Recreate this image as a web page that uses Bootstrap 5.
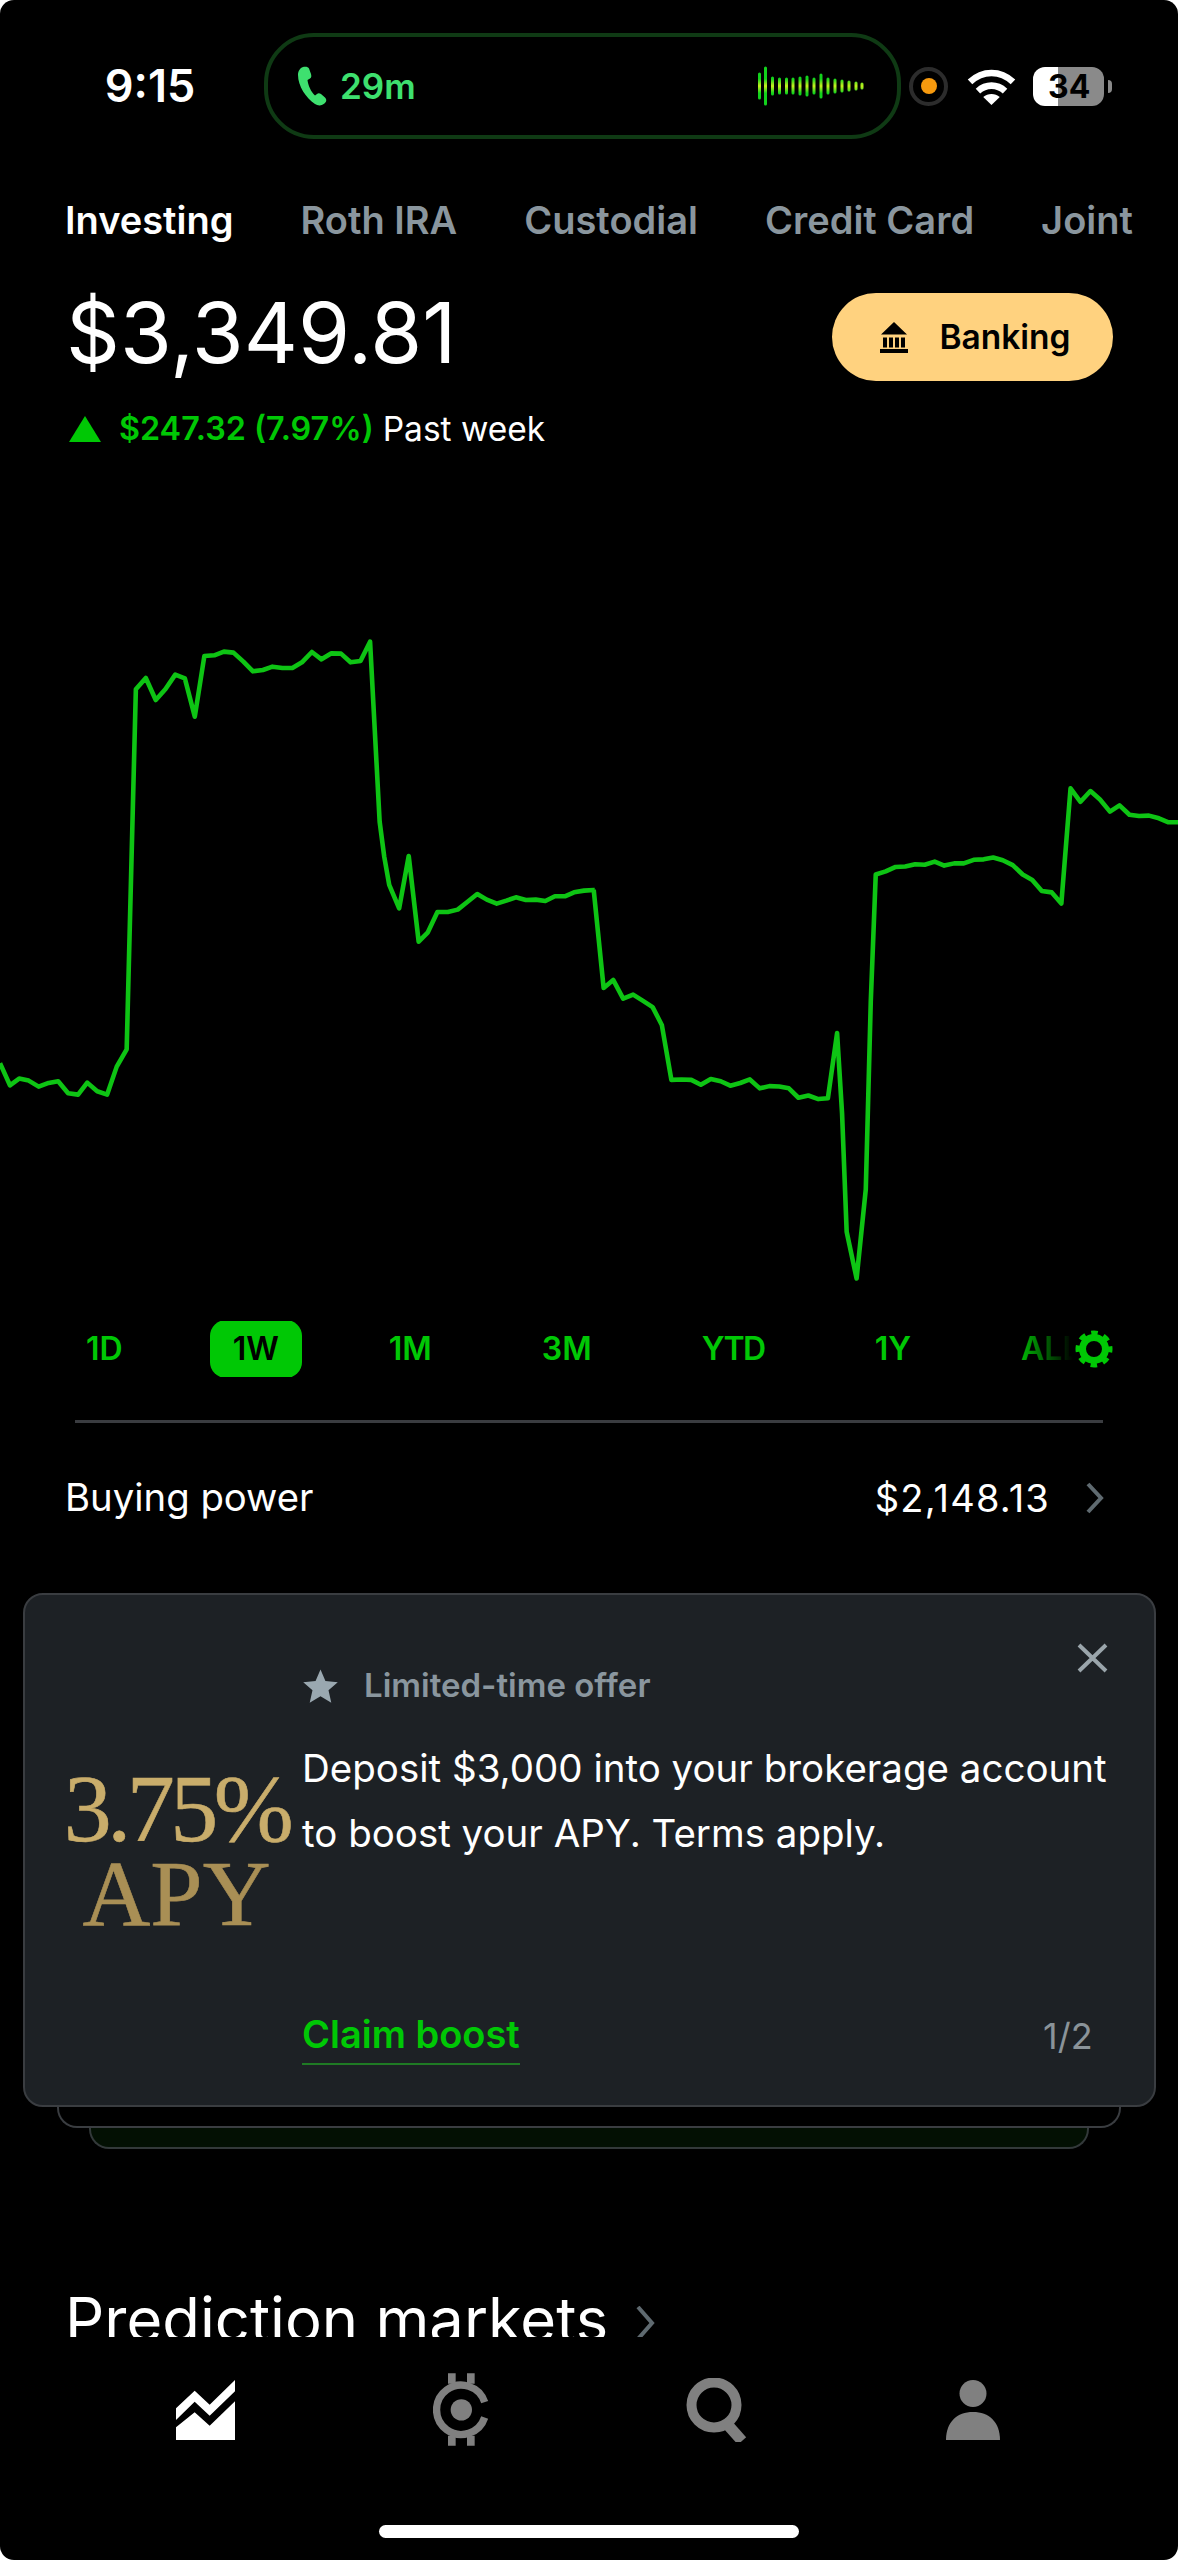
<!DOCTYPE html>
<html lang="en">
  <head>
    <meta charset="UTF-8" />
    <meta name="viewport" content="width=device-width, initial-scale=1.0" />
    <title>Investing</title>
    <link href="https://cdn.jsdelivr.net/npm/bootstrap@5.3.0/dist/css/bootstrap.min.css" rel="stylesheet" />
    <style>
      body {
        background: #fff;
        font-family: Inter, "Liberation Sans", sans-serif;
      }
      .phone {
        width: 1178px;
        height: 2560px;
        background: #000;
        color: #fff;
        border-radius: 14px;
        overflow: hidden;
      }
      .status-row {
        height: 106px;
        margin-top: 33px;
        padding-left: 36px;
      }
      .clock {
        width: 228px;
        text-align: center;
        font-size: 45px;
        font-weight: 600;
      }
      .call-pill {
        width: 637px;
        height: 106px;
        border: 4px solid #0f3a14;
        border-radius: 50px;
        padding: 0 32px 0 29px;
      }
      .call-time {
        color: #3ee06f;
        font-size: 35px;
        font-weight: 600;
        margin-left: 13px;
      }
      .rec-dot {
        width: 39px;
        height: 39px;
        margin-left: 8px;
        border: 4px solid #2c2c2c;
        border-radius: 50%;
      }
      .rec-dot i {
        width: 16px;
        height: 16px;
        border-radius: 50%;
        background: #f79a0e;
      }
      .wifi-ic {
        margin-left: 19px;
      }
      .battery {
        width: 71px;
        height: 39px;
        margin-left: 17px;
        border-radius: 12px;
        background: linear-gradient(90deg, #fff 0 25px, #8a8a8a 25px);
        color: #000;
        font-size: 32px;
        font-weight: 700;
        line-height: 39px;
        padding-left: 15px;
      }
      .battery-nub {
        width: 4px;
        height: 13px;
        margin-left: 4px;
        background: #8a8a8a;
        border-radius: 0 4px 4px 0;
      }
      .acct-tabs {
        margin-top: 57px;
        height: 48px;
        padding-left: 65px;
        gap: 67px;
        font-size: 38px;
        font-weight: 600;
        line-height: 48px;
      }
      .acct-tabs span {
        color: #8a969e;
      }
      .acct-tabs span.on {
        color: #fff;
      }
      .balance-row {
        margin-top: 49px;
        height: 88px;
        padding: 0 65px 0 66px;
      }
      .balance {
        font-size: 84px;
        font-weight: 400;
        line-height: 88px;
        padding-bottom: 8px;
      }
      .bank-btn {
        width: 281px;
        height: 88px;
        border-radius: 44px;
        border: 0;
        background: #ffd27f;
        color: #000;
        font-size: 33.5px;
        font-weight: 600;
        gap: 31px;
      }
      .bank-btn.p-0 {
        padding-left: 6px !important;
      }
      .bank-btn:hover {
        background: #ffd27f;
        color: #000;
      }
      .change-row {
        margin-top: 28px;
        height: 40px;
        padding-left: 69px;
        font-size: 33.5px;
        line-height: 40px;
      }
      .gain {
        color: #00c805;
        font-size: 32.3px;
        font-weight: 600;
        margin: 0 9px 0 18px;
      }
      .chart {
        display: block;
        margin-top: 151px;
      }
      .range-row {
        margin-top: 21px;
        height: 56px;
        padding-left: 63px;
        gap: 64px;
        font-size: 32px;
        font-weight: 600;
        color: #00c805;
      }
      .range-row span {
        padding: 0 23px;
        line-height: 58px;
        border-radius: 16px;
        flex: none;
      }
      .range-row span.on {
        background: #00c805;
        color: #000;
      }
      .range-row span.tight {
        letter-spacing: -1.5px;
      }
      .range-fade {
        top: 0;
        right: 0;
        width: 162px;
        height: 56px;
        padding-right: 65px;
        background: linear-gradient(90deg, rgba(0, 0, 0, 0), #000 35%);
      }
      .rule-line {
        height: 3px;
        margin: 43px 75px 0;
        background: #3a3c40;
      }
      .power-row {
        margin-top: 50px;
        height: 50px;
        padding: 0 74px 0 65px;
        font-size: 38.3px;
      }
      .power-amt {
        gap: 36px;
        font-size: 38px;
        letter-spacing: 1.2px;
      }
      .offer {
        margin: 70px 22px 0 23px;
        height: 514px;
        background: #1d2125;
        border: 2px solid #3a3d41;
        border-radius: 20px;
        z-index: 3;
      }
      .apy-side {
        width: 277px;
        padding: 166px 0 0 26px;
        font-family: "Liberation Serif", serif;
        text-align: center;
      }
      .apy-num {
        font-size: 96px;
        line-height: 96px;
        letter-spacing: -4.5px;
        white-space: nowrap;
        color: #c9ad6b;
        -webkit-text-stroke: 0.6px #c9ad6b;
      }
      .apy-lbl {
        font-size: 94px;
        line-height: 73px;
        color: #a98f55;
        -webkit-text-stroke: 0.6px #a98f55;
      }
      .offer-body {
        padding: 69px 48px 0 0;
      }
      .offer-tag {
        height: 44px;
        gap: 25px;
        font-size: 33px;
        font-weight: 600;
        color: #8a969e;
      }
      .offer-text {
        margin: 28px 0 0;
        font-size: 38.5px;
        line-height: 65px;
        white-space: nowrap;
      }
      .offer-foot {
        margin-top: 143px;
      }
      .claim {
        font-size: 38px;
        font-weight: 600;
        line-height: 50px;
        color: #00c805;
        text-decoration: none;
        border-bottom: 2px solid #1f7a24;
        padding-bottom: 4px;
      }
      .pager {
        margin-right: 14px;
        font-size: 36px;
        color: #8a9399;
      }
      .offer-x {
        top: 48px;
        right: 46px;
      }
      .under-a {
        margin: -50px 57px 0 57px;
        height: 71px;
        background: #000;
        border: 2px solid #3a3d41;
        border-top: 0;
        border-radius: 0 0 20px 20px;
        z-index: 2;
      }
      .under-b {
        margin: -50px 89px 0 89px;
        height: 71px;
        background: #031003;
        border: 2px solid #33393a;
        border-top: 0;
        border-radius: 0 0 20px 20px;
        z-index: 1;
      }
      .pred-clip {
        margin-top: 133px;
        height: 55px;
        padding-left: 65px;
        gap: 28px;
        font-size: 61.5px;
        line-height: 76px;
        white-space: nowrap;
        align-items: flex-start;
      }
      .pred-chev {
        margin-top: 24px;
      }
      .tab-bar {
        margin-top: 36px;
        height: 73px;
        padding-left: 77px;
      }
      .tab-bar div {
        width: 256px;
      }
      .home-bar {
        width: 420px;
        height: 13px;
        margin: 79px auto 0;
        background: #fff;
        border-radius: 7px;
      }
    </style>
  </head>
  <body>
    <div class="phone d-flex flex-column">
      <!-- status bar -->
      <div class="status-row d-flex align-items-center flex-shrink-0">
        <div class="clock">9:15</div>
        <div class="call-pill d-flex align-items-center">
          <svg width="30" height="40" viewBox="0 0 30 40">
            <path fill="#3ee06f" d="M6 1C3 2 1 5 1 9c0 11 8 23 17 29 3 2 7 2 10-1 2-2 1.500-4 0-5.500L24 28c-1.500-1-3-1-4 0l-2 1.500c-4-3.500-7-10.500-7.500-15.500l2.500-1.500c1.500-1 1.500-2.500 1-4.500l-2-5.500C11.300.8 8.500.3 6 1z" />
          </svg>
          <span class="call-time">29m</span>
          <svg class="ms-auto" width="108" height="40" viewBox="0 0 108 40">
            <defs>
              <linearGradient id="wave" gradientUnits="userSpaceOnUse" x1="0" y1="2" x2="0" y2="38">
                <stop offset="0.3" stop-color="#12d21c" />
                <stop offset="0.5" stop-color="#c8f01f" />
                <stop offset="0.7" stop-color="#12d21c" />
              </linearGradient>
            </defs>
            <path stroke="url(#wave)" stroke-width="3" stroke-linecap="round" fill="none" d="M2.500 8v24M8.500 2v36M15.500 12v16M22.500 13v14M29.500 13v14M36 13v14M43 12v16M50 11v18M57 13v14M64 9v22M71 13v14M78 14v12M85 15v10M92 16v8M99 17v6M105 18v4" />
          </svg>
        </div>
        <div class="rec-dot d-flex align-items-center justify-content-center"><i></i></div>
        <svg class="wifi-ic" width="49" height="37" viewBox="200 50 146 112">
          <path fill="none" stroke="#fff" stroke-width="20" d="M208 92c38-36 92-36 130 0" />
          <path fill="none" stroke="#fff" stroke-width="20" d="M232 120c24-22 58-22 82 0" />
          <path fill="#fff" d="M248 138c14-12 36-12 50 0l-25 24z" />
        </svg>
        <div class="battery">34</div>
        <div class="battery-nub"></div>
      </div>

      <!-- account tabs -->
      <div class="acct-tabs d-flex flex-shrink-0 text-nowrap overflow-hidden">
        <span class="on">Investing</span><span>Roth IRA</span><span>Custodial</span><span>Credit Card</span><span>Joint</span>
      </div>

      <div class="balance-row d-flex align-items-center justify-content-between flex-shrink-0">
        <div class="balance">$3,349.81</div>
        <button class="btn bank-btn d-flex align-items-center justify-content-center p-0">
          <svg width="28" height="31" viewBox="0 0 28 31">
            <path d="M14 0 1 12.500h26zM3 15.500h4v10H3zM9 15.500h4v10H9zM15 15.500h4v10h-4zM21 15.500h4v10h-4zM0 27h28v4H0z" />
          </svg>
          <span>Banking</span>
        </button>
      </div>

      <div class="change-row d-flex align-items-center flex-shrink-0">
        <svg width="32" height="26" viewBox="0 0 32 26"><path fill="#00c805" d="M16 0l16 26H0z" /></svg>
        <span class="gain">$247.32 (7.97%)</span><span>Past week</span>
      </div>

      <!-- chart: traced from the week's line, two runs so each keeps its own scale -->
      <svg class="chart flex-shrink-0" width="1178" height="700" viewBox="0 0 1178 700">
        <g fill="none" stroke="#0ec414" stroke-width="4.600" stroke-linejoin="round">
          <polyline vector-effect="non-scaling-stroke" transform="scale(0.3827 0.3333)" points="0,1390 26,1456 50,1436 75,1442 101,1460 127,1449 152,1444 178,1480 204,1484 228,1448 254,1474 280,1484 305,1400 331,1348 355,268 381,234 407,300 432,268 458,224 483,235 509,350 534,168 560,166 585,155 610,158 636,185 661,214 687,210 712,200 738,204 764,204 789,187 815,156 840,178 866,160 891,161 916,187 942,183 967,125 992,665 1004,770 1017,855 1043,925 1068,768 1094,1025 1118,997 1143,936 1170,936 1196,929 1221,906 1247,882 1272,899 1298,911 1323,902 1348,892 1374,900 1400,899 1425,903 1450,889 1476,889 1500,877 1526,872 1552,870 1554,870" />
          <polyline vector-effect="non-scaling-stroke" transform="translate(578 0) scale(0.3827 0.4464)" points="41,649 67,869 92,851 118,893 144,884 170,898 195,912 219,952 244,1075 270,1074 296,1075 321,1086 347,1073 373,1078 398,1088 424,1082 449,1074 475,1094 500,1089 526,1090 551,1094 576,1115 602,1110 628,1118 653,1116 677,970 690,1150 702,1415 728,1520 752,1320 765,900 778,615 804,608 830,598 855,597 881,592 906,593 932,586 957,595 983,590 1008,590 1034,582 1060,581 1085,577 1110,583 1136,594 1162,615 1187,627 1212,652 1238,655 1263,680 1287,422 1313,452 1339,428 1364,447 1390,474 1415,460 1441,481 1466,484 1492,483 1518,489 1543,498 1568,498" />
        </g>
      </svg>

      <div class="range-row position-relative d-flex align-items-center flex-shrink-0 overflow-hidden">
        <span>1D</span><span class="on">1W</span><span>1M</span><span>3M</span><span class="tight">YTD</span><span>1Y</span><span>ALL</span>
        <div class="range-fade position-absolute d-flex align-items-center justify-content-end">
          <svg width="38" height="38" viewBox="0 0 38 38" fill="none" stroke="#00c805">
            <circle cx="19" cy="19" r="11.500" stroke-width="7" />
            <circle cx="19" cy="19" r="16" stroke-width="5" stroke-dasharray="6.500 6.066" stroke-dashoffset="3.250" />
          </svg>
        </div>
      </div>

      <div class="rule-line flex-shrink-0"></div>

      <div class="power-row d-flex align-items-center justify-content-between flex-shrink-0">
        <span>Buying power</span>
        <span class="power-amt d-flex align-items-center">$2,148.13
          <svg width="18" height="32" viewBox="0 0 18 32"><path fill="none" stroke="#5f6a70" stroke-width="4" d="M2 2l13 14L2 30" /></svg>
        </span>
      </div>

      <!-- offer card with the two cards stacked behind -->
      <div class="card offer position-relative d-flex flex-row flex-shrink-0">
        <div class="apy-side flex-shrink-0">
          <div class="apy-num">3.75%</div>
          <div class="apy-lbl">APY</div>
        </div>
        <div class="offer-body flex-grow-1">
          <div class="offer-tag d-flex align-items-center">
            <svg width="37" height="37" viewBox="0 0 24 24"><path fill="#9aa8b0" d="M12 1l3.200 7.500 8 .7-6 5.300 1.800 8L12 18.300 5 22.500l1.800-8-6-5.300 8-.7z" /></svg>
            <span>Limited-time offer</span>
          </div>
          <p class="offer-text">Deposit $3,000 into your brokerage account<br />to boost your APY. Terms apply.</p>
          <div class="offer-foot d-flex align-items-start justify-content-between">
            <a class="claim" href="#">Claim boost</a>
            <span class="pager">1/2</span>
          </div>
        </div>
        <svg class="offer-x position-absolute" width="31" height="30" viewBox="0 0 31 30"><path fill="none" stroke="#9aa5ab" stroke-width="4" d="M2 2l27 26M29 2L2 28" /></svg>
      </div>
      <div class="under-a position-relative flex-shrink-0"></div>
      <div class="under-b position-relative flex-shrink-0"></div>

      <div class="pred-clip d-flex flex-shrink-0 overflow-hidden">
        <span>Prediction markets</span>
        <svg class="pred-chev" width="20" height="34" viewBox="0 0 20 34"><path fill="none" stroke="#5f6a70" stroke-width="4" d="M2 1l14 16L2 33" /></svg>
      </div>

      <!-- bottom tabs -->
      <div class="tab-bar d-flex flex-shrink-0">
        <div class="d-flex align-items-center justify-content-center">
          <svg width="59" height="60" viewBox="47 58 177 180">
            <path fill="#fff" d="M47 143l56-53 45 42 76-74v34l-76 73-45-42-56 55zM47 200l56-45 45 40 76-73v116H47z" />
          </svg>
        </div>
        <div class="d-flex align-items-center justify-content-center">
          <svg width="56" height="73" viewBox="820 40 168 218">
            <path fill="none" stroke="#808080" stroke-width="22" d="M975 127A74 74 0 1 0 975 173" />
            <circle cx="905" cy="150" r="32" fill="#808080" />
            <path fill="#808080" d="M865 40h23v32h-23zM922 40h23v32h-23zM865 228h23v30h-23zM922 228h23v30h-23z" />
          </svg>
        </div>
        <div class="d-flex align-items-center justify-content-center">
          <svg width="62" height="64" viewBox="0 0 62 64">
            <circle cx="28" cy="27" r="22.500" fill="none" stroke="#808080" stroke-width="10" />
            <path fill="none" stroke="#808080" stroke-width="11" d="M41 46l15 17" />
          </svg>
        </div>
        <div class="d-flex align-items-center justify-content-center">
          <svg width="54" height="60" viewBox="0 0 54 60">
            <ellipse cx="27" cy="13.500" rx="13.500" ry="13.500" fill="#808080" />
            <path fill="#808080" d="M0 60c0-18 11-28 27-28s27 10 27 28z" />
          </svg>
        </div>
      </div>

      <div class="home-bar flex-shrink-0"></div>
    </div>
    <script src="https://cdn.jsdelivr.net/npm/bootstrap@5.3.0/dist/js/bootstrap.bundle.min.js"></script>
  </body>
</html>
